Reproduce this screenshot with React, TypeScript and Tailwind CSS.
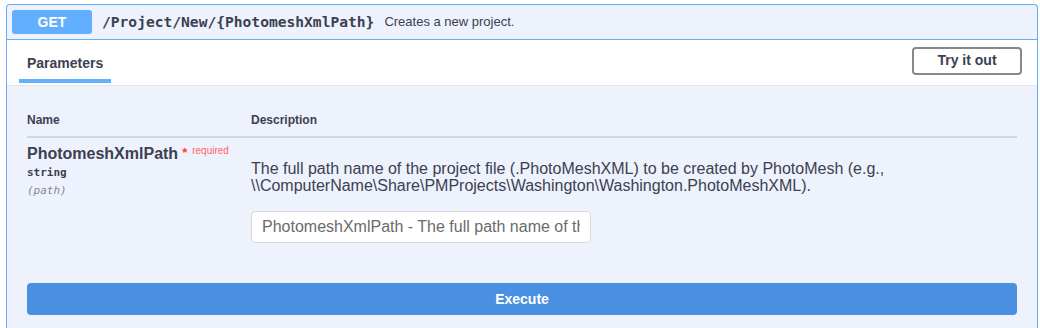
const sans = "font-['Liberation_Sans',Arial,sans-serif]";
const mono = "font-['DejaVu_Sans_Mono','Liberation_Mono',monospace]";

export default function App() {
  return (
    <div className={`h-[328px] overflow-hidden bg-white pt-1 text-[#3b4151] ${sans}`}>
      <div className="ml-[6px] w-[1032px] rounded-t-[4px] border border-b-0 border-[#61affe] bg-[#eef2fd]">
        {/* summary */}
        <div className="flex h-[35px] items-center border-b border-[#61affe] px-[5px]">
          <div className="flex h-[24px] w-[80px] items-center justify-center rounded-[3px] bg-[#61affe] text-[14px] font-bold text-white">
            GET
          </div>
          <span className={`ml-[10px] text-[14.6px] font-bold ${mono}`}>
            /Project/New/&#123;PhotomeshXmlPath&#125;
          </span>
          <span className="ml-[10px] text-[13px]">Creates a new project.</span>
        </div>

        {/* tab header */}
        <div className="flex h-[46px] items-center justify-between border-b border-[#e3e6ee] bg-white pl-[12px] pr-[15px]">
          <div className="flex h-full flex-col justify-end">
            <div className="flex flex-1 items-center px-2 pt-[7px] text-[14px] font-bold">Parameters</div>
            <div className="mb-[2px] h-[4px] bg-[#61affe]" />
          </div>
          <button className="mb-[4px] h-[28px] w-[110px] rounded-[4px] border-2 border-[#888] bg-white text-[14px] font-bold text-[#3b4151]">
            Try it out
          </button>
        </div>

        {/* body */}
        <div className="px-[20px] pt-[27px] pb-[20px]">
          <div className="flex border-b-2 border-[#d3d6de] pb-[9px] text-[12px] font-bold leading-[14px]">
            <div className="w-[224px]">Name</div>
            <div>Description</div>
          </div>
          <div className="flex">
            <div className="w-[224px] pt-[6px]">
              <div className="flex items-start leading-[20px]">
                <span className="text-[16px] font-bold">PhotomeshXmlPath</span>
                <span className="ml-[4px] mt-[1px] text-[13px] font-bold leading-[16px] text-[#ff3b3b]">*</span>
                <span className="ml-[5px] text-[10px] leading-[14px] text-[#ff6666]">required</span>
              </div>
              <div className={`mt-[1px] text-[11px] font-bold leading-[16px] ${mono}`}>string</div>
              <div className={`mt-[2px] text-[11px] italic leading-[16px] text-[#888] ${mono}`}>(path)</div>
            </div>
            <div className="pt-[22px]">
              <p className="text-[16px] leading-[17px]">
                The full path name of the project file (.PhotoMeshXML) to be created by PhotoMesh (e.g.,
                <br />
                \\ComputerName\Share\PMProjects\Washington\Washington.PhotoMeshXML).
              </p>
              <input
                className="mt-[17px] h-[32px] w-[340px] rounded-[4px] border border-[#d9d9d9] bg-white px-[10px] text-[16px] placeholder:text-[#6b6b6b] outline-none"
                placeholder="PhotomeshXmlPath - The full path name of the project file"
              />
            </div>
          </div>
          <button className="mt-[40px] flex h-[32px] w-full items-center justify-center rounded-[4px] bg-[#4990e2] text-[14px] font-bold text-white">
            Execute
          </button>
        </div>
      </div>
    </div>
  );
}
